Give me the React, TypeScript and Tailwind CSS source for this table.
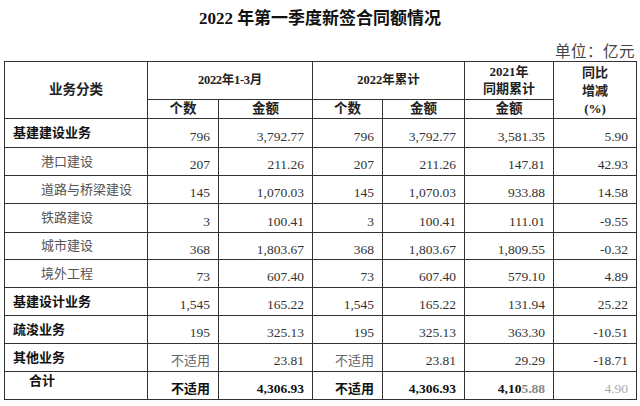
import React from "react";

type Row = {
  label: string;
  level: "top" | "sub" | "total";
  cells: string[];
};

const rows: Row[] = [
  { label: "基建建设业务", level: "top", cells: ["796", "3,792.77", "796", "3,792.77", "3,581.35", "5.90"] },
  { label: "港口建设", level: "sub", cells: ["207", "211.26", "207", "211.26", "147.81", "42.93"] },
  { label: "道路与桥梁建设", level: "sub", cells: ["145", "1,070.03", "145", "1,070.03", "933.88", "14.58"] },
  { label: "铁路建设", level: "sub", cells: ["3", "100.41", "3", "100.41", "111.01", "-9.55"] },
  { label: "城市建设", level: "sub", cells: ["368", "1,803.67", "368", "1,803.67", "1,809.55", "-0.32"] },
  { label: "境外工程", level: "sub", cells: ["73", "607.40", "73", "607.40", "579.10", "4.89"] },
  { label: "基建设计业务", level: "top", cells: ["1,545", "165.22", "1,545", "165.22", "131.94", "25.22"] },
  { label: "疏浚业务", level: "top", cells: ["195", "325.13", "195", "325.13", "363.30", "-10.51"] },
  { label: "其他业务", level: "top", cells: ["不适用", "23.81", "不适用", "23.81", "29.29", "-18.71"] },
  { label: "合计", level: "total", cells: ["不适用", "4,306.93", "不适用", "4,306.93", "4,105.88", "4.90"] },
];

const heights = ["h-[29px]", "h-[28px]", "h-[28px]", "h-[29px]", "h-[27px]", "h-[28px]", "h-[28px]", "h-[28px]", "h-[28px]", "h-[28px]"];

export default function App() {
  return (
    <div
      className="w-[640px] h-[406px] bg-white overflow-hidden text-[#222]"
      style={{ fontFamily: '"Liberation Serif", "Noto Sans CJK SC", serif' }}
    >
      <div className="h-[36px] flex items-center justify-center pt-[1px]">
        <span className="text-[17px] leading-[20px] font-bold text-[#111]">2022 年第一季度新签合同额情况</span>
      </div>
      <div className="h-[25px] flex items-center justify-end pt-[6px] pr-[5px]">
        <span className="text-[15.5px] leading-[18px] text-[#444] tracking-[0.5px]">单位：亿元</span>
      </div>
      <div className="pl-[4px]">
        <table className="border-collapse table-fixed w-[632px] border border-[#333]">
          <colgroup>
            <col className="w-[143px]" />
            <col className="w-[71px]" />
            <col className="w-[94px]" />
            <col className="w-[70px]" />
            <col className="w-[82px]" />
            <col className="w-[89px]" />
            <col className="w-[83px]" />
          </colgroup>
          <thead>
            <tr className="h-[37px]">
              <th rowSpan={2} className="border border-[#333] text-[13.5px] leading-[16px] font-bold align-middle p-0">
                业务分类
              </th>
              <th colSpan={2} className="border border-[#333] text-[12.5px] leading-[16px] font-bold align-middle p-0 tracking-[-0.3px]">
                2022年1-3月
              </th>
              <th colSpan={2} className="border border-[#333] text-[12.5px] leading-[16px] font-bold align-middle p-0">
                2022年累计
              </th>
              <th className="border border-[#333] text-[13px] font-bold align-top p-0 pt-[1px] leading-[17px]">
                2021年
                <br />
                同期累计
              </th>
              <th rowSpan={2} className="border border-[#333] text-[13px] font-bold align-top p-0 pt-[2px] leading-[18px]">
                同比
                <br />
                增减
                <br />
                (%)
              </th>
            </tr>
            <tr className="h-[19px]">
              <th className="border border-[#333] text-[13.5px] font-bold p-0 pt-[1px] leading-[16px]">个数</th>
              <th className="border border-[#333] text-[13.5px] font-bold p-0 pt-[1px] leading-[16px]">金额</th>
              <th className="border border-[#333] text-[13.5px] font-bold p-0 pt-[1px] leading-[16px]">个数</th>
              <th className="border border-[#333] text-[13.5px] font-bold p-0 pt-[1px] leading-[16px]">金额</th>
              <th className="border border-[#333] text-[13.5px] font-bold p-0 pt-[1px] leading-[16px]">金额</th>
            </tr>
          </thead>
          <tbody>
            {rows.map((r, i) => (
              <tr key={r.label} className={heights[i]}>
                <td
                  className={
                    r.level === "top"
                      ? "border border-[#333] text-[13px] font-bold text-[#111] pl-[8px] pr-0 py-0 align-middle leading-[16px]"
                      : r.level === "sub"
                      ? "border border-[#333] text-[13px] text-[#555] pl-[36px] pr-0 py-0 align-middle leading-[16px]"
                      : "border border-[#333] text-[13px] font-bold text-[#111] pl-[24px] pr-0 pb-0 pt-[1px] align-top leading-[16px]"
                  }
                >
                  {r.label}
                </td>
                {r.cells.map((c, j) => {
                  const isNA = c === "不适用";
                  const isTotal = r.level === "total";
                  let cls =
                    "border border-[#333] text-right pr-[8px] pl-0 pt-[7px] pb-0 align-middle leading-[16px] ";
                  if (isTotal) {
                    cls += "font-bold text-[#111] ";
                    cls += isNA ? "text-[13px] " : "text-[13.5px] ";
                  } else if (isNA) {
                    cls += "text-[#666] text-[13px] ";
                  } else {
                    cls += "text-[#333] text-[13.5px] ";
                  }
                  if (isTotal && j === 5) {
                    return (
                      <td key={j} className={cls}>
                        <span className="text-[#aaa] font-normal">4.90</span>
                      </td>
                    );
                  }
                  if (isTotal && j === 4) {
                    return (
                      <td key={j} className={cls}>
                        4,10<span className="text-[#888]">5.88</span>
                      </td>
                    );
                  }
                  return (
                    <td key={j} className={cls}>
                      {c}
                    </td>
                  );
                })}
              </tr>
            ))}
          </tbody>
        </table>
      </div>
    </div>
  );
}
